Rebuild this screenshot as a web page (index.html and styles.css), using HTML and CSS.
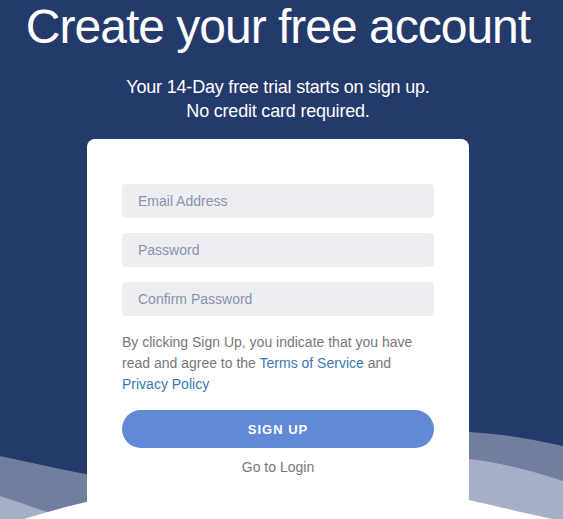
FILE: index.html
```html
<!DOCTYPE html>
<html lang="en">
<head>
  <meta charset="UTF-8">
  <meta name="viewport" content="width=device-width, initial-scale=1.0">
  <title>Sign Up - Create your free account</title>
  <link rel="stylesheet" href="styles.css">
</head>
<body>
  <div class="page">
    <!-- Decorative waves behind the form -->
    <svg class="waves" viewBox="0 0 563 120" preserveAspectRatio="none" aria-hidden="true">
      <path class="wave-mid" d="M0,48 C40,56 80,67 130,73 C260,86 380,20 469,24 C505,26 535,32 563,38 L563,120 L0,120 Z" />
      <path class="wave-light" d="M0,88 C25,96 45,104 80,114 C250,140 380,48 469,51 C505,55 535,64 563,73 L563,120 L0,120 Z" />
      <path class="wave-white" d="M0,118 C35,108 65,98 100,91 C200,72 380,74 469,92 C505,100 535,108 563,113 L563,120 L0,120 Z" />
    </svg>

    <div class="content">
      <h1>Create your free account</h1>
      <p class="subtitle">Your 14-Day free trial starts on sign up.<br>No credit card required.</p>

      <!-- Sign up card -->
      <div class="card">
        <form id="signupForm" class="signup-form">
          <input type="email" name="email" placeholder="Email Address" required />
          <input type="password" name="password" placeholder="Password" required />
          <input type="password" name="confirm" placeholder="Confirm Password" required />

          <p class="terms">By clicking Sign Up, you indicate that you have read and agree to the <a href="#">Terms of Service</a> and <a href="#">Privacy Policy</a></p>

          <button type="submit">Sign Up</button>
        </form>
        <a class="login-link" href="#">Go to Login</a>
      </div>
    </div>
  </div>
</body>
</html>
```

FILE: styles.css
```css
/* General body styling */
body {
  margin: 0;
  font-family: 'Liberation Sans', Arial, Helvetica, sans-serif;
  background-color: #243a6b; /* Navy background */
  overflow: hidden;
}

.page {
  position: relative;
  min-height: 100vh;
  overflow: hidden;
}

/* Waves along the bottom */
.waves {
  position: absolute;
  left: 0;
  bottom: 0;
  width: 100%;
  height: 120px;
  z-index: 0;
}

.wave-mid {
  fill: #717e9f;
}

.wave-light {
  fill: #a6afc5;
}

.wave-white {
  fill: #ffffff;
}

/* Content column */
.content {
  position: relative;
  z-index: 1;
  display: flex;
  flex-direction: column;
  align-items: center;
  padding: 1px 7px 0 0;
}

h1 {
  margin: 0;
  font-size: 48px;
  line-height: 52px;
  font-weight: 400;
  letter-spacing: -1px;
  color: #ffffff;
}

.subtitle {
  margin: 22px 0 0;
  font-size: 18px;
  line-height: 24px;
  letter-spacing: -0.2px;
  color: #ffffff;
  text-align: center;
}

/* Card */
.card {
  margin-top: 16px;
  width: 312px;
  padding: 45px 35px 50px;
  background-color: #ffffff;
  border-radius: 8px;
  display: flex;
  flex-direction: column;
  align-items: center;
}

.signup-form {
  display: flex;
  flex-direction: column;
  gap: 15px;
  width: 100%;
}

.signup-form input {
  height: 34px;
  padding: 0 16px;
  border: none;
  border-radius: 4px;
  background-color: #edeef2;
  font-family: inherit;
  font-size: 14px;
  color: #333;
  outline: none;
}

.signup-form input::placeholder {
  color: #8893a9;
}

.terms {
  margin: 1px 0 0;
  font-size: 14px;
  line-height: 21px;
  color: #777777;
}

.terms a {
  color: #3b78b3;
  text-decoration: none;
}

button {
  height: 38px;
  border: none;
  border-radius: 19px;
  background-color: #6189d7;
  color: #ffffff;
  font-family: inherit;
  font-size: 13px;
  font-weight: 700;
  letter-spacing: 1px;
  text-transform: uppercase;
  cursor: pointer;
}

.login-link {
  margin-top: 9px;
  font-size: 14px;
  line-height: 21px;
  color: #777777;
  text-decoration: none;
}
```
